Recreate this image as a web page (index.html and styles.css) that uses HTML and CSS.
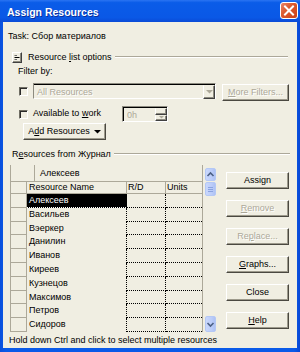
FILE: index.html
```html
<!DOCTYPE html>
<html lang="en">
<head>
    <meta charset="UTF-8">
    <title>Assign Resources</title>
    <link rel="stylesheet" href="styles.css">
</head>
<body>
    <div class="window">
        <div class="titlebar">
            <span class="title">Assign Resources</span>
            <span class="close-btn">
                <svg width="18" height="17" viewBox="0 0 18 17">
                    <path d="M5 4.5 L13 12.5 M13 4.5 L5 12.5" stroke="#fff" stroke-width="2" stroke-linecap="square"/>
                </svg>
            </span>
        </div>

        <div class="client">
            <div class="task">Task: Сбор материалов</div>

            <div class="group-head first">
                <span class="toggle">
                    <svg width="10" height="11" viewBox="0 0 10 11">
                        <path d="M2.5 5.5 H7.5" stroke="#000" stroke-width="1"/>
                        <path d="M2.5 3.5 H5 M2.5 7.5 H5" stroke="#6b6b6b" stroke-width="1"/>
                    </svg>
                </span>
                <span class="group-label">Resource <u>l</u>ist options</span>
                <span class="rule"></span>
            </div>

            <div class="filter-label">Filter by:</div>
            <div class="filter-row">
                <span class="check"></span>
                <div class="combo">
                    <span class="combo-text">All Resources</span>
                    <span class="combo-arrow">
                        <svg width="7" height="4" viewBox="0 0 7 4"><path d="M0 0 H7 L3.5 3.5 Z" fill="#aca899"/></svg>
                    </span>
                </div>
                <div class="btn disabled more-btn"><span><u>M</u>ore Filters...</span></div>
            </div>

            <div class="avail-row">
                <span class="check"></span>
                <span class="avail-label">Available to <u>w</u>ork</span>
                <div class="spin">
                    <span class="spin-text">0h</span>
                    <span class="spin-btns">
                        <span class="spin-up"></span>
                        <span class="spin-down">
                            <svg width="5" height="3" viewBox="0 0 5 3"><path d="M0 0 H5 L2.5 2.5 Z" fill="#aca899"/></svg>
                        </span>
                    </span>
                </div>
            </div>

            <div class="btn add-btn">
                <span>A<u>d</u>d Resources</span>
                <svg width="7" height="4" viewBox="0 0 7 4"><path d="M0 0 H7 L3.5 3.5 Z" fill="#000"/></svg>
            </div>

            <div class="group-head second">
                <span class="group-label">R<u>e</u>sources from Журнал</span>
                <span class="rule"></span>
            </div>

            <div class="main">
                <div class="grid">
                    <div class="entry-row">
                        <span class="entry-blank"></span>
                        <span class="entry-text">Алексеев</span>
                    </div>
                    <div class="row head">
                        <span class="c-ind"></span>
                        <span class="c-name">Resource Name</span>
                        <span class="c-rd">R/D</span>
                        <span class="c-units">Units</span>
                    </div>
                    <div class="row">
                        <span class="c-ind"></span>
                        <span class="c-name selected"><span class="focus">Алексеев</span></span>
                        <span class="c-rd"></span>
                        <span class="c-units"></span>
                    </div>
                    <div class="row">
                        <span class="c-ind"></span><span class="c-name">Васильев</span><span class="c-rd"></span><span class="c-units"></span>
                    </div>
                    <div class="row">
                        <span class="c-ind"></span><span class="c-name">Вэеркер</span><span class="c-rd"></span><span class="c-units"></span>
                    </div>
                    <div class="row">
                        <span class="c-ind"></span><span class="c-name">Данилин</span><span class="c-rd"></span><span class="c-units"></span>
                    </div>
                    <div class="row">
                        <span class="c-ind"></span><span class="c-name">Иванов</span><span class="c-rd"></span><span class="c-units"></span>
                    </div>
                    <div class="row">
                        <span class="c-ind"></span><span class="c-name">Киреев</span><span class="c-rd"></span><span class="c-units"></span>
                    </div>
                    <div class="row">
                        <span class="c-ind"></span><span class="c-name">Кузнецов</span><span class="c-rd"></span><span class="c-units"></span>
                    </div>
                    <div class="row">
                        <span class="c-ind"></span><span class="c-name">Максимов</span><span class="c-rd"></span><span class="c-units"></span>
                    </div>
                    <div class="row">
                        <span class="c-ind"></span><span class="c-name">Петров</span><span class="c-rd"></span><span class="c-units"></span>
                    </div>
                    <div class="row">
                        <span class="c-ind"></span><span class="c-name">Сидоров</span><span class="c-rd"></span><span class="c-units"></span>
                    </div>
                </div>

                <div class="scrollbar">
                    <span class="sb-btn">
                        <svg width="9" height="11" viewBox="0 0 9 11"><path d="M1.5 7 L4.5 4 L7.5 7" stroke="#4d6185" stroke-width="1.6" fill="none"/></svg>
                    </span>
                    <span class="sb-thumb">
                        <svg width="9" height="12" viewBox="0 0 9 12"><path d="M2 4.5 H7 M2 6.5 H7 M2 8.5 H7" stroke="#8aa3e0" stroke-width="1"/></svg>
                    </span>
                    <span class="sb-track"></span>
                    <span class="sb-btn">
                        <svg width="9" height="13" viewBox="0 0 9 13"><path d="M1.5 5 L4.5 8 L7.5 5" stroke="#4d6185" stroke-width="1.6" fill="none"/></svg>
                    </span>
                </div>

                <div class="actions">
                    <div class="btn">Assign</div>
                    <div class="btn disabled"><span><u>R</u>emove</span></div>
                    <div class="btn disabled"><span>Re<u>p</u>lace...</span></div>
                    <div class="btn"><span><u>G</u>raphs...</span></div>
                    <div class="btn">Close</div>
                    <div class="btn"><span><u>H</u>elp</span></div>
                </div>
            </div>

            <div class="status">Hold down Ctrl and click to select multiple resources</div>
        </div>
    </div>
</body>
</html>
```

FILE: styles.css
```css
* {
    box-sizing: border-box;
}
body {
    margin: 0;
    font-family: 'Liberation Sans', Arial, sans-serif;
    font-size: 9px;
    color: #000;
}
u {
    text-decoration: underline;
}
.window {
    width: 300px;
    height: 352px;
    display: flex;
    flex-direction: column;
    background: linear-gradient(90deg, #0a4fdc, #0a5ae8 2%, #0a5ae8 98%, #0846d4);
    padding: 0 3px 4px 3px;
}
.titlebar {
    height: 22px;
    margin: 0 -3px;
    padding: 0 2px 0 7px;
    display: flex;
    align-items: center;
    justify-content: space-between;
    background: linear-gradient(#2a74f2, #0a5ce8 12%, #0a58e6 80%, #0a4ad6);
}
.title {
    color: #fff;
    font-weight: bold;
    font-size: 10.5px;
    text-shadow: 1px 1px #0b2f9c;
    margin-top: 1px;
}
.close-btn {
    width: 18px;
    height: 17px;
    margin-top: -1px;
    border: 1px solid #fff;
    border-radius: 3px;
    background: linear-gradient(135deg, #e9866a, #dc5a30 40%, #cc4218);
    display: flex;
    align-items: center;
    justify-content: center;
}
.close-btn svg {
    margin: -1px;
}
.client {
    flex: 1;
    background-color: #f0eee2;
    display: flex;
    flex-direction: column;
}
.task {
    margin: 9px 0 0 5px;
    line-height: 11px;
}
.group-head {
    height: 12px;
    display: flex;
    align-items: center;
}
.group-head.first {
    margin: 9px 9px 0 9px;
}
.group-head.second {
    margin: 8px 7px 0 9px;
}
.toggle {
    width: 10px;
    height: 11px;
    border: 1px solid;
    border-color: #fff #404040 #404040 #fff;
    box-shadow: inset -1px -1px #8d8b80;
    background-color: #f0eee2;
    display: flex;
    margin-right: 6px;
}
.toggle svg {
    margin: -1px;
}
.group-label {
    line-height: 11px;
    white-space: nowrap;
}
.rule {
    flex: 1;
    height: 2px;
    margin-left: 3px;
    border-top: 1px solid #aca899;
    border-bottom: 1px solid #fff;
}
.filter-label {
    margin: 3px 0 0 15px;
    line-height: 11px;
}
.check {
    width: 9px;
    height: 9px;
    border: 1px solid;
    border-color: #6f6d63 #fff #fff #6f6d63;
    box-shadow: inset 1px 1px #2a2a2a;
    background-color: #f0eee2;
    margin-top: 4px;
    flex: none;
}
.filter-row {
    margin: 6px 0 0 16px;
    height: 17px;
    display: flex;
    align-items: flex-start;
}
.combo {
    width: 183px;
    height: 16px;
    margin-left: 5px;
    border: 1px solid;
    border-color: #8d8b80 #fff #fff #8d8b80;
    box-shadow: inset 0 1px #000;
    display: flex;
}
.combo-text {
    flex: 1;
    color: #aca899;
    text-shadow: 1px 1px #fff;
    padding: 3px 0 0 3px;
    line-height: 11px;
}
.combo-arrow {
    width: 12px;
    height: 14px;
    margin-top: 1px;
    border: 1px solid;
    border-color: #f0eee2 #404040 #404040 #fff;
    box-shadow: inset -1px -1px #8d8b80;
    display: flex;
    align-items: center;
    justify-content: center;
}
.btn {
    height: 17px;
    border: 1px solid;
    border-color: #fff #4a4840 #4a4840 #fff;
    box-shadow: inset -1px -1px #9d9a8c;
    display: flex;
    align-items: center;
    justify-content: center;
    line-height: 11px;
    white-space: nowrap;
}
.btn.disabled {
    color: #aca899;
    text-shadow: 1px 1px #fff;
}
.more-btn {
    width: 67px;
    margin: 1px 0 0 6px;
}
.avail-row {
    margin: 6px 0 0 16px;
    height: 16px;
    display: flex;
    align-items: flex-start;
}
.avail-label {
    width: 89px;
    margin: 2px 0 0 5px;
    line-height: 11px;
}
.spin {
    width: 46px;
    height: 16px;
    border: 1px solid;
    border-color: #8d8b80 #fff #fff #8d8b80;
    box-shadow: inset 1px 1px #000;
    display: flex;
}
.spin-text {
    flex: 1;
    color: #aca899;
    padding: 3px 0 0 4px;
    line-height: 11px;
}
.spin-btns {
    width: 12px;
    display: flex;
    flex-direction: column;
    margin-top: 1px;
}
.spin-up, .spin-down {
    flex: 1;
    border: 1px solid;
    border-color: #f0eee2 #404040 #404040 #fff;
    box-shadow: inset -1px -1px #8d8b80;
    display: flex;
    align-items: center;
    justify-content: center;
}
.add-btn {
    width: 83px;
    margin: 1px 0 0 20px;
    gap: 4px;
}
.main {
    height: 167px;
    margin: 5px 0 0 7px;
    display: flex;
    align-items: flex-start;
}
.grid {
    width: 193px;
    height: 167px;
    border-left: 1px solid #aca899;
    border-right: 1px solid #aca899;
    display: flex;
    flex-direction: column;
    flex: none;
}
.entry-row {
    height: 17px;
    display: flex;
    border-bottom: 1px solid #aca899;
}
.entry-blank {
    width: 24px;
    border-right: 1px solid #aca899;
}
.entry-text {
    padding-left: 5px;
    line-height: 16px;
}
.row {
    display: grid;
    grid-template-columns: 16px 100px 39px 36px;
    height: 13.8px;
    line-height: 12px;
}
.row.head {
    height: 12px;
    line-height: 11px;
    border-bottom: 1px solid #aca899;
}
.row > span {
    overflow: hidden;
    white-space: nowrap;
}
.c-ind {
    border-right: 1px solid #aca899;
    border-bottom: 1px solid #aca899;
}
.row.head .c-ind {
    border-bottom: none;
}
.c-name {
    padding-left: 2px;
    border-right: 1px dotted #000;
}
.c-rd {
    padding-left: 1px;
    border-right: 1px dotted #000;
    border-bottom: 1px dotted #000;
}
.c-units {
    padding-left: 1px;
    border-bottom: 1px dotted #000;
}
.row.head .c-name, .row.head .c-rd {
    border-right: 1px solid #aca899;
    border-bottom: none;
}
.row.head .c-units {
    border-bottom: none;
}
.c-name.selected {
    background-color: #000;
    color: #fff;
    padding: 0;
}
.focus {
    display: block;
    height: 100%;
    padding-left: 2px;
    border-bottom: 1px dotted #fff;
}
.scrollbar {
    width: 11px;
    height: 164px;
    margin: 3px 0 0 2px;
    display: flex;
    flex-direction: column;
    flex: none;
}
.sb-btn, .sb-thumb {
    border: 1px solid #b4c8f5;
    border-radius: 2px;
    background: linear-gradient(90deg, #c9d7fc, #bccdf9 60%, #aec2f4);
    display: flex;
    align-items: center;
    justify-content: center;
}
.sb-btn {
    height: 13px;
}
.sb-thumb {
    height: 14px;
    margin-top: 1px;
}
.sb-track {
    flex: 1;
}
.sb-btn:last-child {
    height: 16px;
}
.actions {
    width: 63px;
    margin-left: 10px;
    padding-top: 7px;
    display: flex;
    flex-direction: column;
    gap: 11px;
    flex: none;
}
.status {
    margin: 3px 0 0 6px;
    line-height: 11px;
    white-space: nowrap;
}
```
